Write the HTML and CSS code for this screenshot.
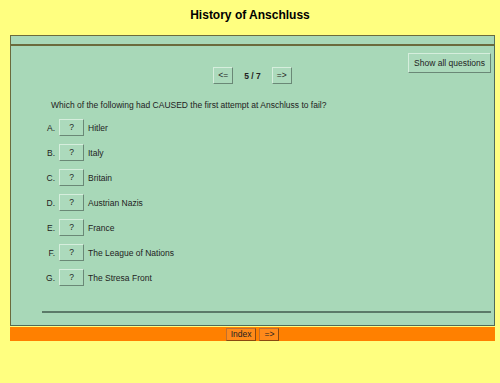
FILE: index.html
```html
<!DOCTYPE html>
<html lang="en">
<head>
    <meta charset="UTF-8">
    <meta name="viewport" content="width=device-width, initial-scale=1.0">
    <title>History of Anschluss</title>
    <link rel="stylesheet" href="styles.css">
</head>
<body>

    <div class="titles">
        <h2 class="exercise-title">History of Anschluss</h2>
    </div>

    <div class="instructions"></div>

    <div class="main">
        <div class="qnav">
            <div class="qnav-center">
                <button class="fbtn nav-btn">&lt;=</button>
                <span class="q-num">5 / 7</span>
                <button class="fbtn nav-btn">=&gt;</button>
            </div>
            <button class="fbtn show-all">Show all questions</button>
        </div>

        <p class="question">Which of the following had CAUSED the first attempt at Anschluss to fail?</p>

        <ol class="answers">
            <li><span class="letter">A.</span><button class="fbtn ans-btn">?</button><span>Hitler</span></li>
            <li><span class="letter">B.</span><button class="fbtn ans-btn">?</button><span>Italy</span></li>
            <li><span class="letter">C.</span><button class="fbtn ans-btn">?</button><span>Britain</span></li>
            <li><span class="letter">D.</span><button class="fbtn ans-btn">?</button><span>Austrian Nazis</span></li>
            <li><span class="letter">E.</span><button class="fbtn ans-btn">?</button><span>France</span></li>
            <li><span class="letter">F.</span><button class="fbtn ans-btn">?</button><span>The League of Nations</span></li>
            <li><span class="letter">G.</span><button class="fbtn ans-btn">?</button><span>The Stresa Front</span></li>
        </ol>

        <hr class="rule">
    </div>

    <div class="navbar">
        <button class="navbtn">Index</button>
        <button class="navbtn">=&gt;</button>
    </div>

</body>
</html>
```

FILE: styles.css
```css
body {
    margin: 0;
    background-color: #ffff80;
    color: #222;
    font-family: "Liberation Sans", Arial, sans-serif;
    font-size: 8.5px;
}
.titles {
    padding-top: 8px;
    margin-bottom: 13px;
    text-align: center;
}
.exercise-title {
    margin: 0;
    font-size: 12px;
    line-height: 14px;
    font-weight: bold;
    color: #000;
}
.instructions {
    margin: 0 5px 0 10px;
    height: 8px;
    background: #a8d8b8;
    border: 1px solid;
    border-color: #6b6b3d #557060 #6b6b3d #6b6b3d;
}
.main {
    margin: 0 5px 0 10px;
    padding: 7px 0 12px;
    background: #a8d8b8;
    border: 1px solid;
    border-color: #6b6b3d #4f6a5a #4f6a5a #6b6b3d;
}
.qnav {
    display: grid;
    grid-template-columns: 1fr auto 1fr;
}
.qnav-center {
    grid-column: 2;
    display: flex;
    align-items: center;
    gap: 11px;
    margin-top: 14px;
}
.q-num {
    font-weight: bold;
}
.fbtn {
    font: inherit;
    color: #222;
    margin: 0;
    padding: 0;
    line-height: 1;
    background: #acdabc;
    border: 1px solid;
    border-color: #d6eedd #6a8876 #6a8876 #d6eedd;
}
.nav-btn {
    height: 17px;
    padding: 0 4px;
}
.show-all {
    grid-column: 3;
    justify-self: end;
    align-self: start;
    height: 20px;
    padding: 0 5px;
    margin-right: 3px;
}
.question {
    margin: 16px 0 0 40px;
    line-height: 10px;
}
.answers {
    list-style: none;
    margin: 9px 0 0;
    padding: 0;
    display: flex;
    flex-direction: column;
    gap: 8px;
}
.answers li {
    display: flex;
    align-items: center;
    gap: 4px;
}
.letter {
    width: 44px;
    text-align: right;
}
.ans-btn {
    width: 25px;
    height: 17px;
}
.rule {
    margin: 25px 3px 0 31px;
    height: 2px;
    border: 0;
    background: #5b7a68;
}
.navbar {
    box-sizing: border-box;
    margin: 1px 5px 0 10px;
    height: 14px;
    padding-top: 1px;
    background: #ff8000;
    display: flex;
    justify-content: center;
    align-items: flex-start;
    gap: 3px;
}
.navbtn {
    font: inherit;
    color: #222;
    margin: 0;
    height: 13px;
    padding: 0 4px;
    line-height: 1;
    background: #ff8a1a;
    border: 1px solid;
    border-color: #c07030 #8a4a10 #8a4a10 #c07030;
}
```
